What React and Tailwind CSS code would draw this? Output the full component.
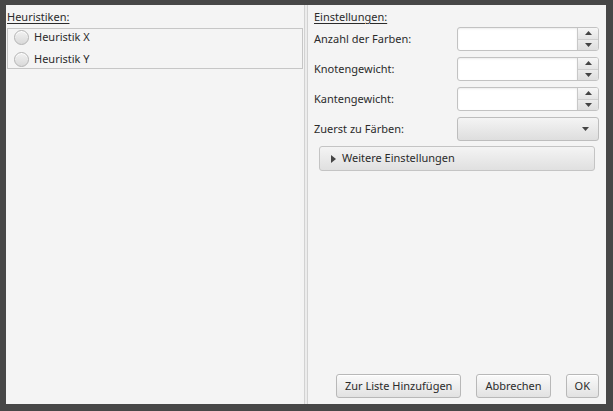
import React from "react";

const font = { fontFamily: '"Noto Sans", "Open Sans", sans-serif' };

function Radio({ label }) {
  return (
    <div className="flex items-center h-[17px] pl-[6px] gap-[5px]">
      <span className="w-[15px] h-[15px] rounded-full border border-[#b4b4b4] bg-gradient-to-b from-[#f2f2f2] to-[#d9d9d9] shadow-[inset_0_1px_0_#ffffff]" />
      <span className="text-[11px] text-[#2b2b2b]">{label}</span>
    </div>
  );
}

function Spinner() {
  return (
    <div className="flex w-[142px] h-[24px] rounded-[3px] border border-[#c2c2c2] bg-white overflow-hidden">
      <div className="flex-1 shadow-[inset_0_1px_2px_rgba(0,0,0,0.08)]" />
      <div className="flex flex-col w-[21px] border-l border-[#c8c8c8]">
        <div className="flex-1 flex items-center justify-center bg-gradient-to-b from-[#f6f6f6] to-[#e4e4e4] border-b border-[#cfcfcf]">
          <svg width="7" height="4" viewBox="0 0 7 4">
            <path d="M0 4 L3.5 0 L7 4 Z" fill="#444" />
          </svg>
        </div>
        <div className="flex-1 flex items-center justify-center bg-gradient-to-b from-[#ececec] to-[#dedede]">
          <svg width="7" height="4" viewBox="0 0 7 4">
            <path d="M0 0 L7 0 L3.5 4 Z" fill="#444" />
          </svg>
        </div>
      </div>
    </div>
  );
}

function Field({ label, children }) {
  return (
    <div className="flex items-center h-[24px]">
      <span className="w-[143px] text-[11px] text-[#2b2b2b]">{label}</span>
      {children}
    </div>
  );
}

function Btn({ children }) {
  return (
    <button className="h-[24px] px-[8px] rounded-[3px] border border-[#b8b8b8] bg-gradient-to-b from-[#fafafa] to-[#e2e2e2] text-[11px] text-[#2b2b2b] shadow-[inset_0_1px_0_#ffffff]">
      {children}
    </button>
  );
}

export default function App() {
  return (
    <div
      className="w-[613px] h-[411px] bg-[#474747] pt-[5px] pl-[6px] pr-[7px] pb-[7px]"
      style={font}
    >
      <div className="flex h-full bg-[#f4f4f4]">
        {/* left side */}
        <div className="w-[298px] pl-[1px] pt-[4px]">
          <div className="h-[16px] leading-[16px] text-[11px] text-[#2b2b2b] underline underline-offset-2">
            Heuristiken:
          </div>
          <div className="mt-[3px] mr-[1px] border border-[#c6c6c6] flex flex-col gap-[5px]">
            <Radio label="Heuristik X" />
            <Radio label="Heuristik Y" />
          </div>
        </div>

        {/* divider */}
        <div className="w-[4px] border-l border-r border-[#d2d2d2] bg-[#ececec]" />

        {/* right side */}
        <div className="flex-1 flex flex-col pl-[6px] pr-[7px] pt-[4px] pb-[6px]">
          <div className="h-[16px] leading-[16px] text-[11px] text-[#2b2b2b] underline underline-offset-2">
            Einstellungen:
          </div>
          <div className="mt-[2px] flex flex-col gap-[6px]">
            <Field label="Anzahl der Farben:">
              <Spinner />
            </Field>
            <Field label="Knotengewicht:">
              <Spinner />
            </Field>
            <Field label="Kantengewicht:">
              <Spinner />
            </Field>
            <Field label="Zuerst zu Färben:">
              <div className="w-[142px] h-[24px] rounded-[3px] border border-[#bdbdbd] bg-gradient-to-b from-[#f4f4f4] to-[#dedede] flex items-center justify-end pr-[9px]">
                <svg width="7" height="4" viewBox="0 0 7 4">
                  <path d="M0 0 L7 0 L3.5 4 Z" fill="#444" />
                </svg>
              </div>
            </Field>
          </div>
          <div className="mt-[5px] ml-[5px] mr-[4px] h-[25px] rounded-[3px] border border-[#c4c4c4] bg-gradient-to-b from-[#f4f4f4] to-[#e0e0e0] flex items-center pl-[11px] gap-[6px]">
            <svg width="5" height="8" viewBox="0 0 5 8">
              <path d="M0 0 L5 4 L0 8 Z" fill="#444" />
            </svg>
            <span className="text-[11px] text-[#2b2b2b]">Weitere Einstellungen</span>
          </div>
          <div className="mt-auto flex justify-end gap-[15px] pr-[0px]">
            <Btn>Zur Liste Hinzufügen</Btn>
            <Btn>Abbrechen</Btn>
            <Btn>OK</Btn>
          </div>
        </div>
      </div>
    </div>
  );
}
